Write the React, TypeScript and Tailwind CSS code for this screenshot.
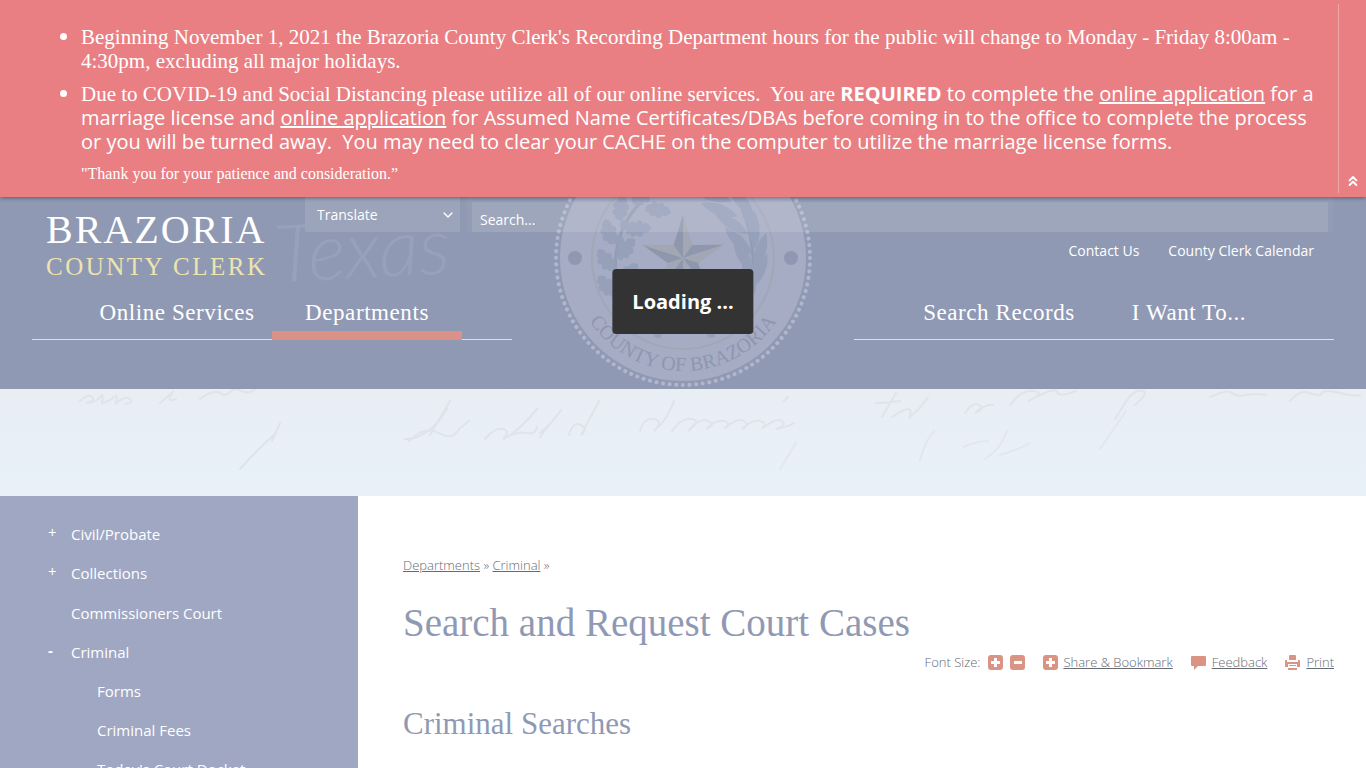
import { ChevronDown, ChevronsUp } from 'lucide-react';

const leftNav = [
    { href: '#services', label: 'Online Services', active: false },
    { href: '#departments', label: 'Departments', active: true },
];

const rightNav = [
    { href: '#records', label: 'Search Records', active: false },
    { href: '#want', label: 'I Want To...', active: false },
];

const sideItems = [
    { label: 'Civil/Probate', toggle: '+' },
    { label: 'Collections', toggle: '+' },
    { label: 'Commissioners Court', toggle: '' },
    { label: 'Criminal', toggle: '-' },
];

const subItems = ['Forms', 'Criminal Fees', "Today's Court Docket"];

// x, y, rotation
const oakLeaves = [
    [-74, -26, -105],
    [-62, -50, -80],
    [-45, -29, -5],
    [-57, -9, -50],
    [-77, 2, -125],
    [-25, -48, 12],
    [-40, -62, -30],
    [-76, 28, -130],
    [-54, 16, -50],
];

const oliveLeaves = [
    [30, -62, 15],
    [37, -48, 20],
    [54, -62, 60],
    [49, -34, 32],
    [64, -46, 75],
    [56, -16, 45],
    [71, -28, 88],
    [61, 0, 58],
    [77, -6, 108],
    [66, 18, 72],
    [76, 14, 115],
];

const OAK = 'M-14 1C-14-3-11-6-9-4C-9-10-3-10-2-6C0-11 6-10 6-5C10-8 13-3 15 0C12 4 9 7 6 4C5 10-1 10-2 6C-5 10-9 8-9 4C-12 6-14 4-14 1Z';
const OLIVE = 'M-20 0C-8-7 6-8 19 0C6 7-8 7-20 0Z';

function Seal() {
    const star = Array.from({ length: 10 }, (_, i) => {
        const r = i % 2 ? 16 : 43;
        const a = (i * Math.PI) / 5 - Math.PI / 2;
        return [r * Math.cos(a), r * Math.sin(a)];
    });

    return (
        <svg className="absolute -top-[69px] left-1/2 h-[260px] w-[260px] -translate-x-1/2" viewBox="-130 -130 260 260" aria-hidden="true">
            <circle r="123" fill="#a6acc4" />
            <circle r="127" fill="none" stroke="#b0b6cc" strokeWidth="4" strokeLinecap="round" strokeDasharray="0.1 6.55" />
            <circle r="91" fill="none" stroke="#a0a7b6" strokeWidth="2" />
            <circle cx="-108" r="7" fill="#8f97b3" />
            <circle cx="108" r="7" fill="#8f97b3" />
            <path d="M-24-72C-48-54-62-34-66-10Q-70 10-64 34M50-70C60-50 76-15 68 34" fill="none" stroke="#919cb5" strokeWidth="3" />
            <g fill="#96a1b9">
                {oakLeaves.map(([x, y, a]) => (
                    <path key={`${x}${y}`} d={OAK} transform={`translate(${x} ${y}) rotate(${a}) scale(.9)`} />
                ))}
                {oliveLeaves.map(([x, y, a]) => (
                    <path key={`${x}${y}`} d={OLIVE} transform={`translate(${x} ${y}) rotate(${a})`} />
                ))}
                <circle cx="-64" cy="-17" r="5" />
                <circle cx="-58" cy="-33" r="5" />
                <circle cx="-25" cy="76" r="4" />
                <circle cx="28" cy="76" r="4" />
            </g>
            {star.map(([x, y], i) => {
                const [nx, ny] = star[(i + 1) % 10];
                return <path key={i} d={`M0 0L${x} ${y}L${nx} ${ny}Z`} fill={i % 2 ? '#8f97ac' : '#a2a7b3'} />;
            })}
            <path id="seal-arc" d="M-113 0A113 113 0 0 0 113 0" fill="none" />
            <text fontFamily="Liberation Serif, serif" fontSize="20" fill="#8f96b2" textAnchor="middle">
                <textPath href="#seal-arc" startOffset="50%">COUNTY OF BRAZORIA</textPath>
            </text>
        </svg>
    );
}

// Faded handwriting strip under the header
function Script() {
    return (
        <svg
            className="h-[107px] w-full"
            viewBox="0 0 1366 107"
            preserveAspectRatio="xMidYMin slice"
            fill="none"
            stroke="#dfe4eb"
            strokeWidth="2"
            strokeLinecap="round"
            aria-hidden="true"
        >
            <path d="M80 12q8-8 12-4t-6 6q10 0 14-6t2 6q8-2 12-6t2 6q10-8 14-4t-4 5M160 14l14-12q-10 12 2 8M200 10q14-10 20-6t10-1t12-1t14-3" />
            <path d="M240 80q18-20 36-36M272 52l8-18M405 50q18 0 34-18l8-12M409 52q16-16 30-8t20-4l10-8M430 46l20-34M485 50q10-12 18-10t0 10q14-6 34-30M507 48q12-6 20-4t10-6M540 44q12-10 22-24l-22 28M569 46q4-14 12-10t0 10l18-34" />
            <path d="M640 42q4-14 14-12t0 12q14-12 20-30M672 42q10-14 20-12t-4 12q12-14 20-10t-2 8q10-10 18-8t0 8q14-12 20-8t-2 8q10-10 18-8t2 8q14-12 20-8t-6 8q12-2 18-6M788 8l-4 4" />
            <path d="M882 28l14-24M876 14q12 0 24-2M892 28q12-8 16-8t2 8q10-8 18-20M965 24q8-12 14-8t-4 8q12-10 18-8M1010 16q12-16 24-14t-6 10q16-8 22-10t8 2t18-2M1115 30l14-22q8-8 14-6t-8 14M1210 8q18-8 22-4t14 2t20 0M1290 12q10-12 20-8t12 0t18 0t20 2" />
            <g stroke="#e2e7ef">
                <path d="M985 70q16-10 22-28M920 72q4-18 14-30M1100 60l26-38M780 80l16-26M964 58q12-6 24-6M1000 66q20-6 30-12" />
            </g>
        </svg>
    );
}

function MainNav({ items }: { items: typeof leftNav }) {
    return (
        <nav className="flex h-[46px] w-[480px] justify-center border-b border-[#e8e6ae]">
            {items.map((item) => (
                <a
                    className={`flex h-[46px] w-[190px] items-start justify-center border-b-[9px] pt-[3px] font-['Liberation_Serif',serif] text-[23px] leading-8 tracking-wide text-white ${
                        item.active ? 'border-[#db9186]' : 'border-transparent'
                    }`}
                    href={item.href}
                    key={item.href}
                >
                    {item.label}
                </a>
            ))}
        </nav>
    );
}

function ToolIcon({ d }: { d: string }) {
    return (
        <svg className="h-[15px] w-[15px] shrink-0" viewBox="0 0 15 15" fill="#db9384" fillRule="evenodd" aria-hidden="true">
            <path d={d} />
        </svg>
    );
}

const PLUS = 'M3 0H12Q15 0 15 3V12Q15 15 12 15H3Q0 15 0 12V3Q0 0 3 0ZM6 3V6H3V9H6V12H9V9H12V6H9V3Z';
const MINUS = 'M3 0H12Q15 0 15 3V12Q15 15 12 15H3Q0 15 0 12V3Q0 0 3 0ZM4 6V9H12V6Z';
const BUBBLE = 'M1 1H14Q15 1 15 2V10Q15 11 14 11H7L3 15V11H1Q0 11 0 10V2Q0 1 1 1Z';
const PRINTER = 'M4 1Q4 0 5 0H10Q11 0 11 1V5H4ZM0 6Q0 5 1 5H2V7H13V5H14Q15 5 15 6V12H12V9H3V12H0ZM4 10H11V11H4ZM3 13H12V15H3Z';

export default function App() {
    return (
        <div className="relative flex h-screen flex-col overflow-hidden bg-white font-['Open_Sans',sans-serif]">
            <section className="relative z-10 flex shrink-0 bg-[#e97f83] text-white shadow-[0_1px_4px_rgba(0,0,0,0.4)]">
                <div className="flex-1 pt-[25px] pr-6 pb-3 pl-[81px]">
                    <ul className="list-disc text-[20px] leading-6">
                        <li className="mb-[9px]">
                            <span className="font-['Liberation_Serif',serif] text-[21px]">
                                Beginning November 1, 2021 the Brazoria County Clerk's Recording Department hours for the public will change to
                                Monday - Friday 8:00am -{' '}
                                <br />
                                4:30pm, excluding all major holidays.
                            </span>
                        </li>
                        <li>
                            <span className="font-['Liberation_Serif',serif] text-[21px]">
                                Due to COVID-19 and Social Distancing please utilize all of our online services.&nbsp; You are{' '}
                            </span>
                            <strong>REQUIRED</strong> to complete the <a className="underline" href="#marriage">online application</a> for a{' '}
                            <br />
                            marriage license and <a className="underline" href="#dba">online application</a> for Assumed Name Certificates/DBAs
                            before coming in to the office to complete the process or you will be turned away.&nbsp; You may need to clear your
                            CACHE on the computer to utilize the marriage license forms.
                        </li>
                    </ul>
                    <p className="mt-2 font-['Liberation_Serif',serif] text-[16px] leading-[23px]">"Thank you for your patience and consideration.”</p>
                </div>
                <div className="my-1 flex w-7 items-end justify-center border-l border-[#f0a5a8]">
                    <button className="pb-1" type="button" aria-label="Collapse notice">
                        <ChevronsUp className="h-4 w-4" strokeWidth={3} />
                    </button>
                </div>
            </section>

            <header className="relative h-48 shrink-0 overflow-hidden bg-[#9099b3] px-8 text-white">
                <Seal />
                <div className="relative flex h-[97px]">
                    <div className="relative w-[273px] pt-3 pl-3.5 font-['Liberation_Serif',serif]">
                        <span
                            className="absolute top-0 left-[242px] -rotate-3 font-['Lato',sans-serif] text-[80px] leading-[100px] font-light text-[#98a1ba] italic"
                            aria-hidden="true"
                        >
                            Texas
                        </span>
                        <p className="text-[40px] leading-[42px] tracking-wider">BRAZORIA</p>
                        <p className="text-[25px] leading-8 tracking-widest text-[#ede4ae]">COUNTY CLERK</p>
                    </div>
                    <div className="relative h-[35px] w-[155px] bg-[#9ba4ba]">
                        <select className="h-full w-full appearance-none px-3 text-[14px] outline-none" aria-label="Translate">
                            <option>Translate</option>
                        </select>
                        <ChevronDown className="pointer-events-none absolute top-2.5 right-1 h-4 w-4" />
                    </div>
                    <div className="flex flex-1 flex-col pl-1.5">
                        <div className="bg-white/3 pt-[5px] pr-1.5 pl-1.5">
                            <input
                                className="block h-[30px] w-full bg-white/10 px-2 pt-1 text-[14px] leading-6 outline-none placeholder:text-white"
                                type="search"
                                aria-label="Search"
                                placeholder="Search..."
                            />
                        </div>
                        <div className="flex justify-end gap-[29px] pt-[9px] pr-5 text-[14px] leading-5">
                            <a href="#contact">Contact Us</a>
                            <a href="#calendar">County Clerk Calendar</a>
                        </div>
                    </div>
                </div>
                <div className="relative flex justify-between">
                    <MainNav items={leftNav} />
                    <MainNav items={rightNav} />
                </div>
            </header>

            <div className="shrink-0 bg-linear-to-b from-[#e9eef1] via-[#e8eef6] via-15% to-[#e9f1f8]">
                <Script />
            </div>

            <div className="flex flex-1">
                <aside className="w-[358px] shrink-0 bg-[#9fa7c3] pt-[18px] text-[15px] text-white">
                    <ul>
                        {sideItems.map((item) => (
                            <li className="flex h-10 items-center not-first:-mt-px nth-3:mt-0" key={item.label}>
                                <span className={`w-[71px] pb-1 pl-12 ${item.toggle === '-' ? 'font-bold' : ''}`}>{item.toggle}</span>
                                <a href="#department">{item.label}</a>
                            </li>
                        ))}
                    </ul>
                    <ul className="pl-[97px]">
                        {subItems.map((label) => (
                            <li className="flex h-[39px] items-center" key={label}>
                                <a href="#page">{label}</a>
                            </li>
                        ))}
                    </ul>
                </aside>

                <main className="flex-1 pt-[59px] pr-8 pl-[45px]">
                    <p className="text-[13px] leading-5 font-light text-[#666b72]">
                        <a className="underline" href="#departments">Departments</a> » <a className="underline" href="#criminal">Criminal</a> »
                    </p>
                    <h1 className="mt-5 font-['Liberation_Serif',serif] text-[39px] leading-[56px] text-[#9099b3]">Search and Request Court Cases</h1>
                    <div className="mt-px flex items-center justify-end text-[13px] leading-5 font-light text-[#666b72]">
                        <span className="mr-2">Font Size:</span>
                        <button className="mr-[7px]" type="button" aria-label="Increase font size">
                            <ToolIcon d={PLUS} />
                        </button>
                        <button className="mr-[18px]" type="button" aria-label="Decrease font size">
                            <ToolIcon d={MINUS} />
                        </button>
                        <a className="mr-[18px] flex items-center gap-[5px] underline" href="#share">
                            <ToolIcon d={PLUS} />
                            Share &amp; Bookmark
                        </a>
                        <a className="mr-[18px] flex items-center gap-1.5 underline" href="#feedback">
                            <ToolIcon d={BUBBLE} />
                            Feedback
                        </a>
                        <a className="flex items-center gap-1.5 underline" href="#print">
                            <ToolIcon d={PRINTER} />
                            Print
                        </a>
                    </div>
                    <h2 className="mt-8 font-['Liberation_Serif',serif] text-[31px] leading-10 text-[#9099b3]">Criminal Searches</h2>
                </main>
            </div>

            <div
                className="absolute top-[269px] left-1/2 z-20 -translate-x-1/2 rounded bg-[#333] px-5 py-4 text-[20px] leading-[33px] font-bold whitespace-nowrap text-white"
                role="status"
            >
                Loading ...
            </div>
        </div>
    );
}
